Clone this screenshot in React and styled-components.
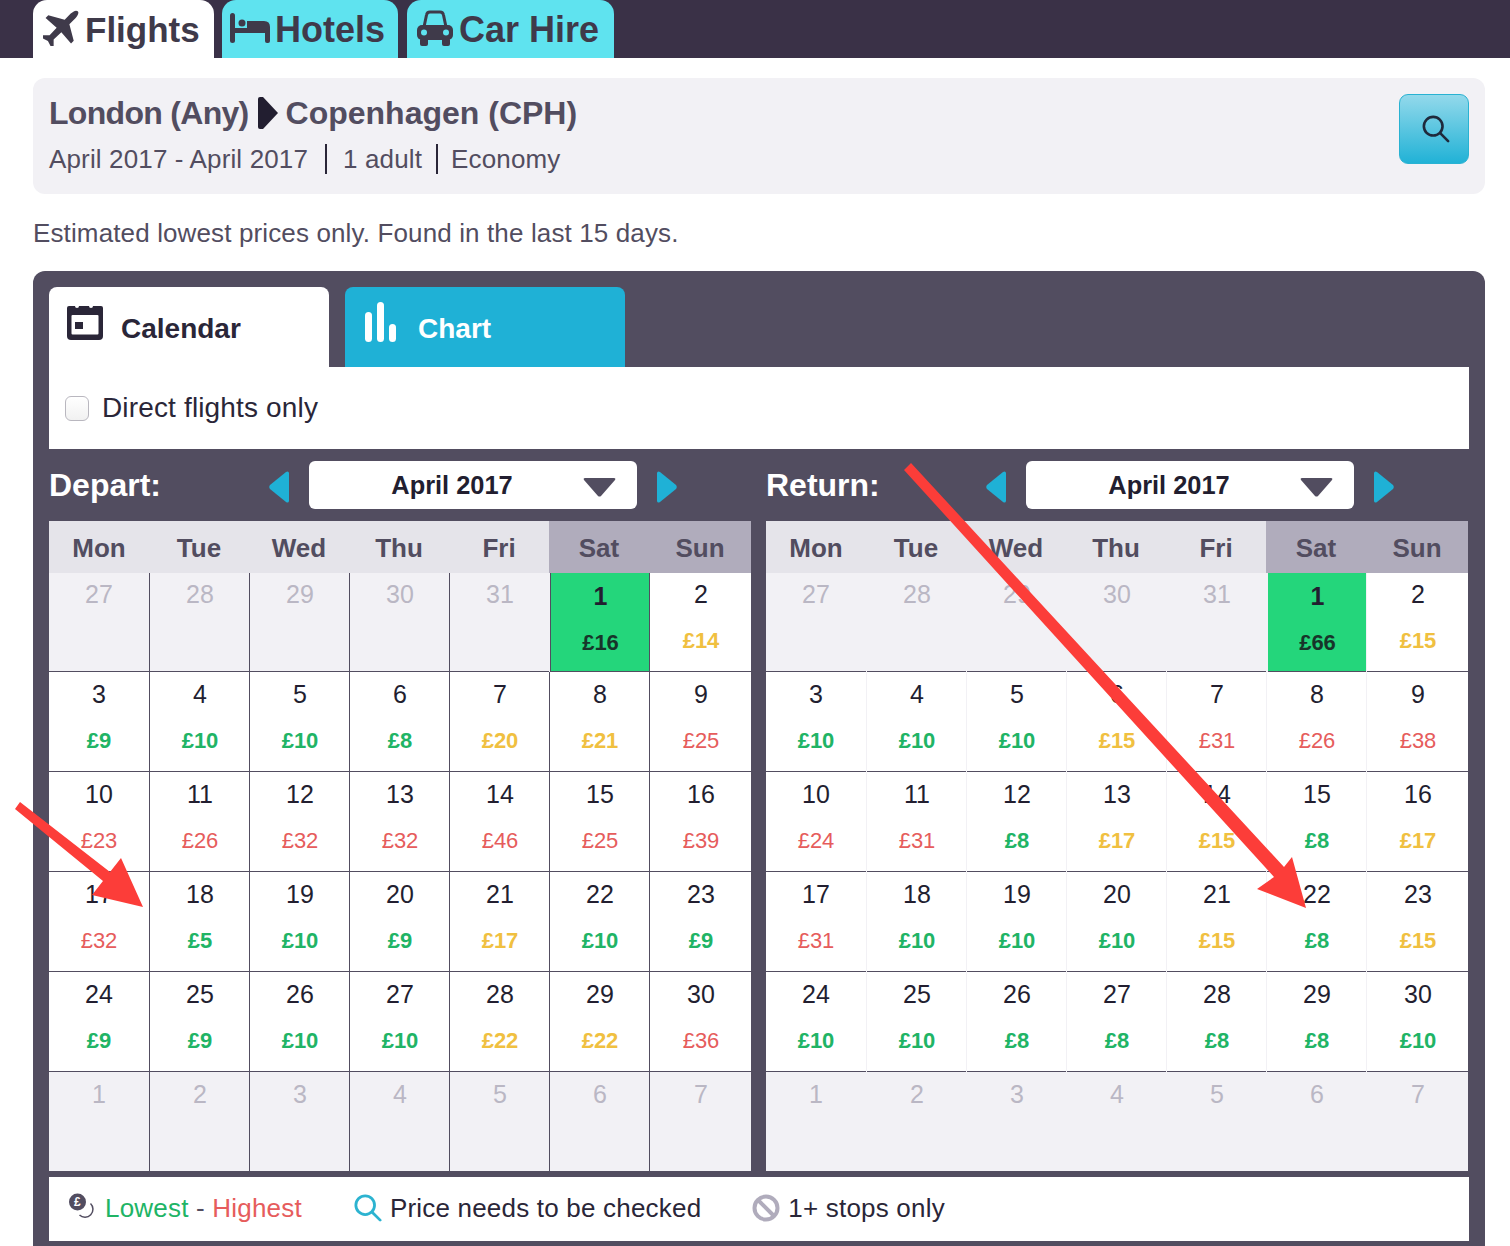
import React from "react";
import styled, { createGlobalStyle } from "styled-components";

const Global = createGlobalStyle`
  html, body { margin: 0; padding: 0; background: #fff; }
  body { font-family: "Liberation Sans", Arial, sans-serif; color: #221e30; }
  * { box-sizing: border-box; }
`;

const Page = styled.div`
  position: relative;
  width: 1510px;
  height: 1246px;
  overflow: hidden;
`;

const TopBar = styled.nav`
  display: flex;
  align-items: flex-end;
  height: 58px;
  padding-left: 33px;
  background: #3a3147;
`;

const TopTab = styled.div`
  display: flex;
  align-items: center;
  gap: ${(p) => p.$gap}px;
  width: ${(p) => p.$w}px;
  height: 58px;
  margin-right: ${(p) => p.$mr}px;
  padding: 2px 0 0 ${(p) => p.$pl}px;
  border-radius: 14px 14px 0 0;
  background: ${(p) => (p.$active ? "#fff" : "#5fe3ef")};
  color: #3f3a4a;
  font-size: ${(p) => p.$fs}px;
  font-weight: 700;
  white-space: nowrap;
  svg { flex: none; margin-bottom: 4px; }
`;

const Content = styled.div`
  padding: 20px 25px 0 33px;
`;

const Summary = styled.section`
  display: flex;
  justify-content: space-between;
  height: 116px;
  padding: 16px 16px 0 16px;
  border-radius: 12px;
  background: #f2f1f5;
  color: #524d60;
`;

const Route = styled.div`
  display: flex;
  align-items: center;
  height: 38px;
  font-size: 32px;
  font-weight: 700;
  gap: 9px;
`;

const Origin = styled.span`
  letter-spacing: -0.7px;
`;

const Destination = styled.span`
  margin-left: -1px;
`;

const Meta = styled.div`
  display: flex;
  align-items: center;
  height: 30px;
  margin-top: 12px;
  font-size: 26px;
  letter-spacing: 0.14px;
`;

const MetaItem = styled.span`
  padding-right: ${(p) => p.$pad}px;
  margin-right: ${(p) => p.$pad - 1}px;
  border-right: 2px solid #2a2638;
  line-height: 30px;
  &:last-child { border-right: 0; }
`;

const SearchButton = styled.button`
  display: flex;
  align-items: center;
  justify-content: center;
  width: 70px;
  height: 70px;
  padding: 0 0 1px 4px;
  border: 1px solid #29b2d2;
  border-radius: 9px;
  background: linear-gradient(#93d9eb, #21b2d6);
`;

const Note = styled.p`
  margin: 23px 0 21px;
  height: 33px;
  font-size: 26px;
  line-height: 33px;
  letter-spacing: 0.13px;
  color: #524d60;
`;

const Panel = styled.section`
  height: 975px;
  padding: 16px 16px 0;
  border-radius: 12px 12px 0 0;
  background: #524d60;
`;

const PanelTabs = styled.div`
  display: flex;
  gap: 16px;
  height: 80px;
`;

const PanelTab = styled.div`
  display: flex;
  align-items: center;
  gap: ${(p) => p.$gap}px;
  width: 280px;
  padding: 4px 0 0 ${(p) => p.$pl}px;
  border-radius: 8px 8px 0 0;
  background: ${(p) => (p.$active ? "#fff" : "#1fb1d6")};
  color: ${(p) => (p.$active ? "#2a2638" : "#fff")};
  font-size: 28px;
  font-weight: 700;
`;

const TabIcon = styled.span`
  display: flex;
  margin-bottom: 14px;
`;

const Filter = styled.label`
  display: flex;
  align-items: center;
  gap: 13px;
  height: 82px;
  padding-left: 16px;
  padding-bottom: 1px;
  background: #fff;
  font-size: 28px;
  letter-spacing: 0.15px;
  color: #2a2638;
`;

const CheckBox = styled.span`
  width: 24px;
  height: 25px;
  margin-top: 2px;
  border: 1px solid #b9b7bf;
  border-radius: 6px;
  background: linear-gradient(#fff, #f1f1f1);
`;

const Calendars = styled.div`
  display: grid;
  grid-template-columns: 702px 702px;
  column-gap: 15px;
`;

const Controls = styled.div`
  display: flex;
  align-items: center;
  height: 72px;
`;

const Label = styled.div`
  width: 220px;
  color: #fff;
  font-size: 32px;
  font-weight: 700;
  margin-top: 1px;
`;

const NavArrow = styled.svg`
  display: block;
  width: 20px;
  height: 32px;
  flex: none;
  margin-top: 4px;
`;

const MonthSelect = styled.div`
  position: relative;
  display: flex;
  align-items: center;
  justify-content: center;
  width: 328px;
  height: 48px;
  margin: 0 20px;
  padding: 1px 42px 0 0;
  border-radius: 6px;
  background: #fff;
  color: #221e30;
  font-size: 25.4px;
  font-weight: 700;
`;

const Caret = styled.svg`
  position: absolute;
  right: 21px;
  top: 16px;
  width: 33px;
  height: 20px;
`;

const Grid = styled.div`
  display: grid;
  grid-template-columns: repeat(6, 100px) 102px;
  grid-template-rows: 52px 99px repeat(4, 100px) 99px;
  background: #f2f1f5;
`;

const DayHead = styled.div`
  display: flex;
  align-items: center;
  justify-content: center;
  padding-top: 2px;
  background: ${(p) => (p.$weekend ? "#b0acbc" : "#e5e4ea")};
  color: #524d60;
  font-size: 26px;
  font-weight: 700;
`;

const Cell = styled.div`
  padding: ${(p) => (p.$firstRow ? 6 : 7)}px 0 0 1px;
  text-align: center;
  margin-left: ${(p) => (p.$best ? 1 : 0)}px;
  background: ${(p) => (p.$muted ? "#f2f1f5" : p.$best ? "#24d67b" : "#fff")};
  box-shadow: inset 0 -1px 0 ${(p) => (p.$last ? "transparent" : "#524d60")};
  color: ${(p) => (p.$muted ? "#bab7c4" : "#221e30")};
  border-left: 1px solid ${(p) => (p.$lightLines ? "#f2f1f5" : "#524d60")};
  &:nth-child(7n + 1) { border-left: 0; padding-left: 0; }
`;

const DayNum = styled.div`
  height: 30px;
  font-size: 25px;
  line-height: 30px;
  font-weight: ${(p) => (p.$best ? 700 : 400)};
  margin-top: ${(p) => (p.$best ? 2 : 0)}px;
`;

const Price = styled.div`
  margin-top: 19px;
  height: 26px;
  font-size: 22px;
  line-height: 26px;
  font-weight: ${(p) => (p.$tier === "high" ? 400 : 700)};
  color: ${(p) =>
    ({ best: "#17352a", low: "#20b465", mid: "#f0c040", high: "#e65c5c" }[p.$tier])};
`;

const Legend = styled.footer`
  display: flex;
  align-items: center;
  height: 64px;
  margin-top: 6px;
  padding: 0 0 2px 20px;
  background: #fff;
  font-size: 26px;
  letter-spacing: 0.2px;
  color: #2a2638;
`;

const LegendItem = styled.div`
  display: flex;
  align-items: center;
  gap: ${(p) => p.$gap}px;
  margin-right: ${(p) => p.$mr}px;
`;

const LowText = styled.span`
  color: #20b465;
`;
const HighText = styled.span`
  color: #e65c5c;
`;
const DashText = styled.span`
  color: #524d60;
`;

const Overlay = styled.svg`
  position: absolute;
  left: 0;
  top: 0;
  width: 1510px;
  height: 1246px;
  pointer-events: none;
`;

const tierOf = (c) => ({ g: "low", y: "mid", r: "high" }[c]);

const depart = [
  [27,null],[28,null],[29,null],[30,null],[31,null],[1,"16b"],[2,"14y"],
  [3,"9g"],[4,"10g"],[5,"10g"],[6,"8g"],[7,"20y"],[8,"21y"],[9,"25r"],
  [10,"23r"],[11,"26r"],[12,"32r"],[13,"32r"],[14,"46r"],[15,"25r"],[16,"39r"],
  [17,"32r"],[18,"5g"],[19,"10g"],[20,"9g"],[21,"17y"],[22,"10g"],[23,"9g"],
  [24,"9g"],[25,"9g"],[26,"10g"],[27,"10g"],[28,"22y"],[29,"22y"],[30,"36r"],
  [1,null],[2,null],[3,null],[4,null],[5,null],[6,null],[7,null],
];

const ret = [
  [27,null],[28,null],[29,null],[30,null],[31,null],[1,"66b"],[2,"15y"],
  [3,"10g"],[4,"10g"],[5,"10g"],[6,"15y"],[7,"31r"],[8,"26r"],[9,"38r"],
  [10,"24r"],[11,"31r"],[12,"8g"],[13,"17y"],[14,"15y"],[15,"8g"],[16,"17y"],
  [17,"31r"],[18,"10g"],[19,"10g"],[20,"10g"],[21,"15y"],[22,"8g"],[23,"15y"],
  [24,"10g"],[25,"10g"],[26,"8g"],[27,"8g"],[28,"8g"],[29,"8g"],[30,"10g"],
  [1,null],[2,null],[3,null],[4,null],[5,null],[6,null],[7,null],
];

const HEADS = ["Mon", "Tue", "Wed", "Thu", "Fri", "Sat", "Sun"];

function Month({ label, data, lightLines }) {
  return (
    <div>
      <Controls>
        <Label>{label}</Label>
        <NavArrow viewBox="0 0 20 32">
          <path d="M20 2 L20 30 Q19.500 32.500 17 31 L1 18 Q-0.500 16 1 14 L17 1 Q19.500 -0.500 20 2 Z" fill="#1fb1d6" />
        </NavArrow>
        <MonthSelect>
          April 2017
          <Caret viewBox="0 0 33 20">
            <path d="M2 1 H31 Q33 1 32 3 L18 19 Q16.500 20 15 19 L1 3 Q0 1 2 1 Z" fill="#524d60" />
          </Caret>
        </MonthSelect>
        <NavArrow viewBox="0 0 20 32">
          <path d="M0 2 L0 30 Q0.500 32.500 3 31 L19 18 Q20.500 16 19 14 L3 1 Q0.500 -0.500 0 2 Z" fill="#1fb1d6" />
        </NavArrow>
      </Controls>
      <Grid>
        {HEADS.map((h, i) => (
          <DayHead key={h} $weekend={i > 4}>{h}</DayHead>
        ))}
        {data.map(([d, p], i) => {
          const muted = p === null;
          const best = p && p.endsWith("b");
          const tier = p ? (best ? "best" : tierOf(p.slice(-1))) : null;
          return (
            <Cell key={i} $muted={muted} $best={best} $firstRow={i < 7} $last={i >= 35} $lightLines={lightLines}>
              <DayNum $best={best}>{d}</DayNum>
              {p && <Price $tier={tier}>£{p.slice(0, -1)}</Price>}
            </Cell>
          );
        })}
      </Grid>
    </div>
  );
}

const PlaneIcon = () => (
  <svg width="36" height="36" viewBox="-19 -19 38 38" fill="#3f3a4a">
    <g transform="rotate(45)">
      <path d="M0 -25 C2.500 -25 3.500 -21 3.500 -18 L3.500 -9 L19 0 V4 L3.500 3 L3 14 L8 19 V22 L0 19.500 L-8 22 V19 L-3 14 L-3.500 3 L-19 4 V0 L-3.500 -9 L-3.500 -18 C-3.500 -21 -2.500 -25 0 -25 Z" />
    </g>
  </svg>
);

const BedIcon = () => (
  <svg width="40" height="30" viewBox="0 0 40 30" fill="#3f3a4a">
    <rect x="0" y="0" width="5" height="30" rx="2.500" />
    <circle cx="12" cy="10" r="3.500" />
    <path d="M17 8 H34 Q40 8 40 14 V20 H2 V15 H17 Z" />
    <rect x="35" y="18" width="5" height="12" rx="2" />
  </svg>
);

const CarIcon = () => (
  <svg width="36" height="36" viewBox="0 0 36 36">
    <path d="M7 17 L9.500 5 Q10 2 13 2 H23 Q26 2 26.500 5 L29 17" fill="none" stroke="#3f3a4a" strokeWidth="3" />
    <rect x="0" y="15" width="36" height="15" rx="5" fill="#3f3a4a" />
    <circle cx="7" cy="22.500" r="3" fill="#5fe3ef" />
    <circle cx="29" cy="22.500" r="3" fill="#5fe3ef" />
    <rect x="3" y="28" width="8" height="8" rx="2" fill="#3f3a4a" />
    <rect x="25" y="28" width="8" height="8" rx="2" fill="#3f3a4a" />
  </svg>
);

const CalendarIcon = () => (
  <svg width="38" height="37" viewBox="0 0 38 37">
    <path d="M3 2 H35 Q37 2 37 4 V32 Q37 36 33 36 H5 Q1 36 1 32 V4 Q1 2 3 2 Z" fill="#2a2638" />
    <rect x="5.500" y="11" width="27" height="19.500" rx="1" fill="#fff" />
    <rect x="9" y="18" width="8" height="7" fill="#2a2638" />
    <circle cx="11" cy="2" r="2" fill="#fff" />
    <circle cx="25" cy="2" r="2" fill="#fff" />
  </svg>
);

const ChartIcon = () => (
  <svg width="32" height="40" viewBox="0 0 32 40" fill="#fff">
    <rect x="0" y="10" width="7" height="30" rx="3.500" />
    <rect x="12" y="0" width="7" height="40" rx="3.500" />
    <rect x="24" y="22" width="7" height="18" rx="3.500" />
  </svg>
);

const Lens = ({ size, color, sw }) => (
  <svg width={size} height={size} viewBox="0 0 30 30" fill="none" stroke={color} strokeWidth={sw} strokeLinecap="round">
    <circle cx="12" cy="12" r="10" />
    <path d="M19.500 19.500 L28 28" />
  </svg>
);

const CoinIcon = () => (
  <svg width="30" height="30" viewBox="0 0 30 30">
    <path d="M21.500 10.500 A7.800 7.800 0 1 1 10.500 22" fill="none" stroke="#524d60" strokeWidth="1.500" />
    <circle cx="8.500" cy="9" r="8.500" fill="#524d60" />
    <text x="8.500" y="13" fontSize="12" fontWeight="700" fill="#fff" textAnchor="middle" fontFamily="Liberation Sans">£</text>
  </svg>
);

const BanIcon = () => (
  <svg width="28" height="28" viewBox="0 0 28 28" fill="none" stroke="#b0acbc" strokeWidth="4">
    <circle cx="14" cy="14" r="11.500" />
    <path d="M6 6 L22 22" />
  </svg>
);

export default function App() {
  return (
    <Page>
      <Global />
      <TopBar>
        <TopTab $active $w={181} $mr={8} $pl={10} $gap={6} $fs={35}>
          <PlaneIcon />
          Flights
        </TopTab>
        <TopTab $w={176} $mr={9} $pl={8} $gap={5} $fs={36}>
          <BedIcon />
          Hotels
        </TopTab>
        <TopTab $w={207} $mr={0} $pl={10} $gap={6} $fs={36}>
          <CarIcon />
          Car Hire
        </TopTab>
      </TopBar>
      <Content>
        <Summary>
          <div>
            <Route>
              <Origin>London (Any)</Origin>
              <svg width="20" height="32" viewBox="0 0 20 32">
                <path d="M0 2 Q0 0 2 0 H5 L20 16 L5 32 H2 Q0 32 0 30 Z" fill="#221e30" />
              </svg>
              <Destination>Copenhagen (CPH)</Destination>
            </Route>
            <Meta>
              <MetaItem $pad={17}>April 2017 - April 2017</MetaItem>
              <MetaItem $pad={14}>1 adult</MetaItem>
              <MetaItem $pad={14}>Economy</MetaItem>
            </Meta>
          </div>
          <SearchButton aria-label="Search">
            <Lens size={28} color="#1f2a3c" sw={2.800} />
          </SearchButton>
        </Summary>
        <Note>Estimated lowest prices only. Found in the last 15 days.</Note>
        <Panel>
          <PanelTabs>
            <PanelTab $active $pl={17} $gap={17}>
              <TabIcon><CalendarIcon /></TabIcon>
              Calendar
            </PanelTab>
            <PanelTab $pl={20} $gap={21}>
              <TabIcon><ChartIcon /></TabIcon>
              Chart
            </PanelTab>
          </PanelTabs>
          <Filter>
            <CheckBox />
            Direct flights only
          </Filter>
          <Calendars>
            <Month label="Depart:" data={depart} />
            <Month label="Return:" data={ret} lightLines />
          </Calendars>
          <Legend>
            <LegendItem $gap={6} $mr={52}>
              <CoinIcon />
              <span>
                <LowText>Lowest</LowText> <DashText>-</DashText> <HighText>Highest</HighText>
              </span>
            </LegendItem>
            <LegendItem $gap={8} $mr={51}>
              <Lens size={28} color="#2cb3d0" sw={3} />
              Price needs to be checked
            </LegendItem>
            <LegendItem $gap={8} $mr={0}>
              <BanIcon />
              1+ stops only
            </LegendItem>
          </Legend>
        </Panel>
      </Content>
      <Overlay viewBox="0 0 1510 1246">
        <polygon points="15,809 20,802 110,872 121,858 143,907 92,895 103,881" fill="#fc3d39" />
        <polygon points="904,470 911,463 1284,867 1292,857 1306,908 1257,889 1274,877" fill="#fc3d39" />
      </Overlay>
    </Page>
  );
}
